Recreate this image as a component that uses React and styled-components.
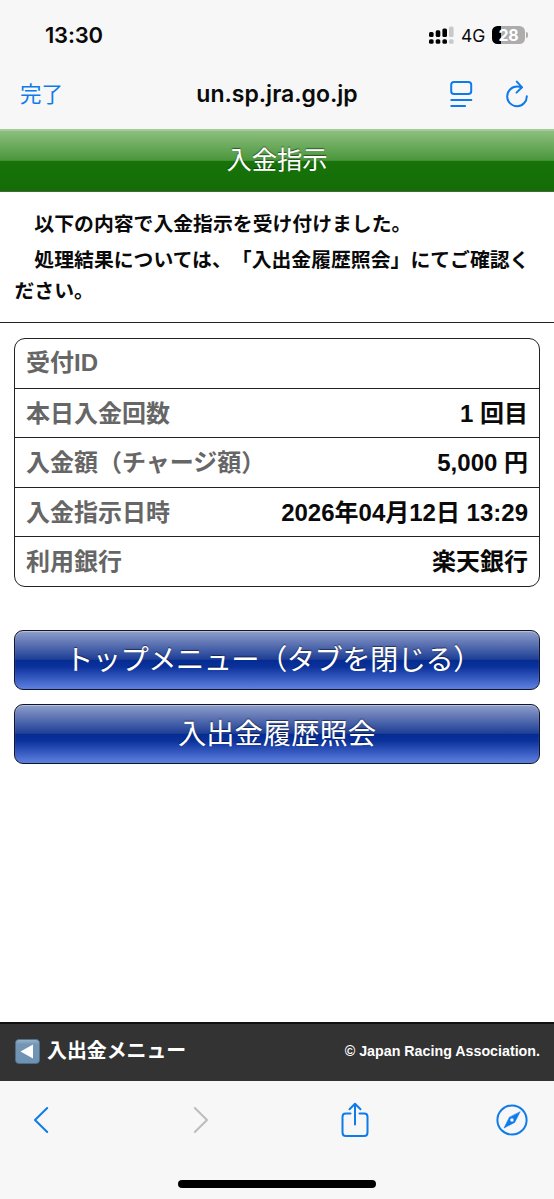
import React from "react";
import styled, { createGlobalStyle } from "styled-components";

const GlobalStyle = createGlobalStyle`
  * {
    box-sizing: border-box;
  }
  body {
    margin: 0;
    background: #fff;
  }
`;

const uiFont = `Inter, "Noto Sans CJK JP", sans-serif`;
const pageFont = `"Liberation Sans", "Noto Sans CJK JP", sans-serif`;

const Screen = styled.div`
  display: flex;
  flex-direction: column;
  width: 554px;
  height: 1199px;
  overflow: hidden;
  background: #fff;
  color: #0a0a0a;
  font-family: ${pageFont};
  text-spacing-trim: space-all;
`;

const BrowserTop = styled.header`
  flex: none;
  height: 129px;
  background: #f7f7f8;
  font-family: ${uiFont};
`;

const StatusBar = styled.div`
  display: flex;
  align-items: center;
  justify-content: space-between;
  height: 70px;
  padding: 0 26px 0 45px;
`;

const Clock = styled.time`
  font-size: 22px;
  font-weight: 600;
  letter-spacing: -0.2px;
`;

const StatusIcons = styled.div`
  display: flex;
  align-items: center;
`;

const Network = styled.span`
  margin: 1px 7px 0 7px;
  font-size: 17.5px;
  line-height: 20px;
  letter-spacing: -0.2px;
`;

const BatteryBody = styled.div`
  width: 33px;
  height: 18px;
  border-radius: 5.5px;
  background: linear-gradient(90deg, #000 28%, #adadad 28%);
  color: #fff;
  font-size: 16px;
  font-weight: 700;
  line-height: 18px;
  text-align: center;
  letter-spacing: -0.3px;
`;

const BatteryTip = styled.span`
  width: 2px;
  height: 6px;
  margin-left: 1px;
  border-radius: 0 2px 2px 0;
  background: #adadad;
`;

const AddressBar = styled.div`
  display: grid;
  grid-template-columns: 1fr auto 1fr;
  align-items: center;
  height: 48px;
  padding: 0 26px;
`;

const DoneButton = styled.button`
  justify-self: start;
  margin-left: -6px;
  padding: 0;
  border: 0;
  background: none;
  color: #0f7bea;
  font-family: ${uiFont};
  font-size: 21.5px;
  line-height: 30px;
`;

const Host = styled.span`
  font-size: 23px;
  font-weight: 600;
  line-height: 30px;
`;

const AddressActions = styled.div`
  display: flex;
  justify-content: flex-end;
  align-items: center;
  gap: 33px;
`;

const PageTitle = styled.h1`
  flex: none;
  height: 63px;
  margin: 0;
  border-top: 2px solid #a5cb9c;
  border-bottom: 1px solid #44663c;
  background: linear-gradient(#8cbf7e 0%, #4b963c 49%, #177409 50%, #146c07 100%);
  color: #fff;
  font-size: 25.3px;
  font-weight: 400;
  line-height: 59px;
  text-align: center;
  text-shadow: 0 -1px 1px rgba(0, 0, 0, 0.5);
`;

const Message = styled.section`
  flex: none;
  height: 131px;
  padding: 17px 14px 0 14.5px;
  border-bottom: 1.5px solid #222;
  font-size: 19.85px;
  font-weight: 700;
  line-height: 31px;

  p {
    margin: 0 0 5px;
  }
`;

const DetailList = styled.dl`
  flex: none;
  margin: 15px 14px 0;
  border: 1px solid #222;
  border-radius: 11px;
  font-size: 24px;
  font-weight: 700;
`;

const DetailRow = styled.div`
  display: flex;
  justify-content: space-between;
  height: 48.6px;
  padding: 0 11px;
  line-height: 48px;

  & + & {
    height: 49.6px;
    border-top: 1px solid #222;
    line-height: 49.4px;
  }
`;

const Label = styled.dt`
  color: #666;
`;

const Value = styled.dd`
  margin: 0;
`;

const ButtonStack = styled.nav`
  display: flex;
  flex: 1;
  flex-direction: column;
  gap: 14px;
  padding: 43px 14px 0;
`;

const MenuButton = styled.button`
  height: 60px;
  padding: 0 ${(props) => (props.$wide ? "8px" : "0")} 0 0;
  border: 1.5px solid #11162c;
  border-radius: 9px;
  background: linear-gradient(#8f9fcb 0%, #5d73b3 22%, #1e3f96 49%, #042b91 50%, #0b329c 62%, #5a7cdd 98%);
  box-shadow: inset 0 1px 1px rgba(255, 255, 255, 0.4);
  color: #fff;
  font-family: ${pageFont};
  font-size: 28.3px;
  font-weight: 400;
  letter-spacing: ${(props) => (props.$wide ? "-0.55px" : "0")};
  line-height: 56px;
  text-shadow: 0 -1px 1px rgba(0, 0, 0, 0.5);
`;

const Footer = styled.footer`
  display: flex;
  flex: none;
  align-items: center;
  height: 59px;
  padding: 0 14px 3px 15px;
  border-top: 2px solid #111;
  background: #333;
  color: #fff;
  font-weight: 700;
`;

const BackLink = styled.a`
  display: flex;
  align-items: center;
  gap: 7px;
  font-size: 19.9px;
  line-height: 28px;
`;

const Copyright = styled.small`
  margin-left: auto;
  font-size: 14.25px;
`;

const Toolbar = styled.div`
  display: grid;
  flex: none;
  grid-template-columns: 160px 148px 155px auto;
  align-items: center;
  height: 77px;
  padding-left: 33px;
  background: #f7f7f8;
`;

const HomeArea = styled.div`
  flex: none;
  height: 41px;
  padding-top: 22px;
  background: #f7f7f8;
`;

const HomeIndicator = styled.div`
  width: 198px;
  height: 8px;
  margin: 0 auto;
  border-radius: 4px;
  background: #000;
`;

const LineIcon = styled.svg`
  display: block;
  fill: none;
  stroke: ${(props) => props.$color || "#0f7bea"};
  stroke-width: 2;
  stroke-linecap: round;
  stroke-linejoin: round;
`;

const details = [
  { label: "受付ID", value: "" },
  { label: "本日入金回数", value: "1 回目" },
  { label: "入金額（チャージ額）", value: "5,000 円" },
  { label: "入金指示日時", value: "2026年04月12日 13:29" },
  { label: "利用銀行", value: "楽天銀行" },
];

const SignalIcon = () => (
  <svg width="25" height="18" viewBox="0 0 25 18">
    <rect x="0" y="6" width="4.6" height="5" rx="1.5" />
    <rect x="6.7" y="4.2" width="4.6" height="6.8" rx="1.5" />
    <rect x="13.4" y="2.4" width="4.6" height="8.6" rx="1.5" />
    <rect x="20" y="0.5" width="4.6" height="10.5" rx="1.5" fill="#c9c9c9" />
    <rect x="0" y="13.2" width="4.6" height="4.6" rx="1.6" />
    <rect x="6.7" y="13.2" width="4.6" height="4.6" rx="1.6" />
    <rect x="13.4" y="13.2" width="4.6" height="4.6" rx="1.6" />
    <rect x="20" y="13.2" width="4.6" height="4.6" rx="1.6" fill="#c9c9c9" />
  </svg>
);

const ReaderIcon = () => (
  <LineIcon width="23" height="28" viewBox="0 0 23 28">
    <rect x="1.2" y="2" width="20" height="12" rx="2.8" />
    <path d="M1.2 20H21.4M1.2 26H15.2" strokeWidth="1.8" />
  </LineIcon>
);

const ReloadIcon = () => (
  <LineIcon width="22" height="28" viewBox="0 0 22 28">
    <path d="M20.8 16.3A9.8 9.8 0 1 1 11 6.6Q13.5 6.6 15.6 7.4" />
    <path d="M10.8 1.6L16 7.3L10.5 12.6" />
  </LineIcon>
);

const ShareIcon = () => (
  <LineIcon width="28" height="36" viewBox="0 0 28 36">
    <path d="M9.5 11.5H4.8Q1.5 11.5 1.5 14.8V30.5Q1.5 34 4.8 34H23.2Q26.5 34 26.5 30.5V14.8Q26.5 11.5 23.2 11.5H18.5" />
    <path d="M14 22.5V2M8.5 7.3L14 1.8L19.5 7.3" />
  </LineIcon>
);

const CompassIcon = () => (
  <LineIcon width="32" height="32" viewBox="0 0 32 32">
    <circle cx="16" cy="16" r="14.6" />
    <path
      d="M24 8L18.7 18.4L8 24L13.3 13.4ZM18.1 16A2.1 2.1 0 1 0 13.9 16A2.1 2.1 0 1 0 18.1 16Z"
      fill="#0f7bea"
      fillRule="evenodd"
      strokeWidth="0.6"
    />
  </LineIcon>
);

const BackEmoji = () => (
  <svg width="25" height="25" viewBox="0 0 25 25">
    <defs>
      <linearGradient id="tile" x1="0" y1="0" x2="0" y2="1">
        <stop offset="0" stopColor="#9bb4ca" />
        <stop offset="0.2" stopColor="#7496b5" />
        <stop offset="1" stopColor="#6d92b3" />
      </linearGradient>
    </defs>
    <rect x="0.5" y="0.5" width="24" height="24" rx="3.5" fill="url(#tile)" stroke="#50708b" strokeWidth="0.8" />
    <path d="M5.5 12.5L18 5.5V19.5Z" fill="#fff" />
  </svg>
);

export default function App() {
  return (
    <>
      <GlobalStyle />
      <Screen>
        <BrowserTop>
          <StatusBar>
            <Clock>13:30</Clock>
            <StatusIcons>
              <SignalIcon />
              <Network>4G</Network>
              <BatteryBody>28</BatteryBody>
              <BatteryTip />
            </StatusIcons>
          </StatusBar>
          <AddressBar>
            <DoneButton>完了</DoneButton>
            <Host>un.sp.jra.go.jp</Host>
            <AddressActions>
              <ReaderIcon />
              <ReloadIcon />
            </AddressActions>
          </AddressBar>
        </BrowserTop>

        <PageTitle>入金指示</PageTitle>
        <Message>
          <p>　以下の内容で入金指示を受け付けました。</p>
          <p>　処理結果については、「入出金履歴照会」にてご確認ください。</p>
        </Message>

        <DetailList>
          {details.map((item) => (
            <DetailRow key={item.label}>
              <Label>{item.label}</Label>
              <Value>{item.value}</Value>
            </DetailRow>
          ))}
        </DetailList>

        <ButtonStack>
          <MenuButton $wide>トップメニュー（タブを閉じる）</MenuButton>
          <MenuButton>入出金履歴照会</MenuButton>
        </ButtonStack>

        <Footer>
          <BackLink>
            <BackEmoji />
            入出金メニュー
          </BackLink>
          <Copyright>© Japan Racing Association.</Copyright>
        </Footer>

        <Toolbar>
          <LineIcon width="16" height="28" viewBox="0 0 16 28">
            <path d="M14.2 2L2 14L14.2 26" />
          </LineIcon>
          <LineIcon $color="#bcbcbe" width="16" height="28" viewBox="0 0 16 28">
            <path d="M1.8 2L14 14L1.8 26" />
          </LineIcon>
          <ShareIcon />
          <CompassIcon />
        </Toolbar>
        <HomeArea>
          <HomeIndicator />
        </HomeArea>
      </Screen>
    </>
  );
}
